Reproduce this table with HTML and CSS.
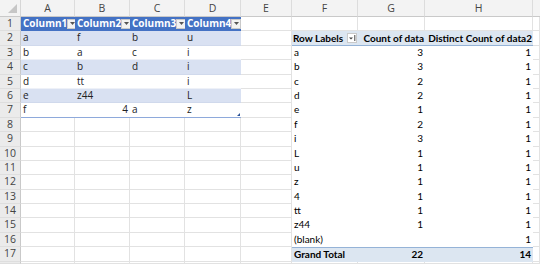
FILE: index.html
```html
<!DOCTYPE html>
<html>
<head>
<meta charset="utf-8">
<link rel="stylesheet" href="styles.css">
</head>
<body>
<div class="sheet">
  <!-- column headers -->
  <div class="corner"><svg width="21" height="17" viewBox="0 0 21 17"><polygon points="17,4 17,13 8,13" fill="#c6c6c6"/></svg></div>
  <div class="ch">A</div><div class="ch">B</div><div class="ch">C</div><div class="ch">D</div><div class="ch">E</div><div class="ch">F</div><div class="ch">G</div><div class="ch">H</div><div class="ch last"></div>

  <!-- row 1 -->
  <div class="rh">1</div>
  <div class="th"><span>Column1</span><span class="dd"><svg width="5" height="3" viewBox="0 0 5 3"><polygon points="0,0 5,0 2.5,3" fill="#555"/></svg></span></div>
  <div class="th"><span>Column2</span><span class="dd"><svg width="5" height="3" viewBox="0 0 5 3"><polygon points="0,0 5,0 2.5,3" fill="#555"/></svg></span></div>
  <div class="th"><span>Column3</span><span class="dd"><svg width="5" height="3" viewBox="0 0 5 3"><polygon points="0,0 5,0 2.5,3" fill="#555"/></svg></span></div>
  <div class="th"><span>Column4</span><span class="dd"><svg width="5" height="3" viewBox="0 0 5 3"><polygon points="0,0 5,0 2.5,3" fill="#555"/></svg></span></div>
  <div class="c"></div><div class="c"></div><div class="c"></div><div class="c"></div><div class="c"></div>

  <!-- row 2 -->
  <div class="rh">2</div>
  <div class="tb">a</div><div class="tb">f</div><div class="tb">b</div><div class="tb">u</div>
  <div class="c"></div>
  <div class="ph"><span>Row Labels</span><span class="fb"><svg width="8" height="8" viewBox="0 0 8 8"><polygon points="1,3.5 5,3.5 3,5.5" fill="#444"/><rect x="6.3" y="1" width="1" height="6" fill="#444"/></svg></span></div>
  <div class="ph num">Count of data</div>
  <div class="ph num">Distinct Count of data2</div>
  <div class="c"></div>

  <!-- row 3 -->
  <div class="rh">3</div>
  <div class="tw">b</div><div class="tw">a</div><div class="tw">c</div><div class="tw">i</div>
  <div class="c"></div>
  <div class="pv">a</div><div class="pv num">3</div><div class="pv num">1</div>
  <div class="c"></div>

  <!-- row 4 -->
  <div class="rh">4</div>
  <div class="tb">c</div><div class="tb">b</div><div class="tb">d</div><div class="tb">i</div>
  <div class="c"></div>
  <div class="pv">b</div><div class="pv num">3</div><div class="pv num">1</div>
  <div class="c"></div>

  <!-- row 5 -->
  <div class="rh">5</div>
  <div class="tw">d</div><div class="tw">tt</div><div class="tw"></div><div class="tw">i</div>
  <div class="c"></div>
  <div class="pv">c</div><div class="pv num">2</div><div class="pv num">1</div>
  <div class="c"></div>

  <!-- row 6 -->
  <div class="rh">6</div>
  <div class="tb">e</div><div class="tb">z44</div><div class="tb"></div><div class="tb">L</div>
  <div class="c"></div>
  <div class="pv">d</div><div class="pv num">2</div><div class="pv num">1</div>
  <div class="c"></div>

  <!-- row 7 -->
  <div class="rh">7</div>
  <div class="tw end">f</div><div class="tw end num">4</div><div class="tw end">a</div><div class="tw end handle">z</div>
  <div class="c"></div>
  <div class="pv">e</div><div class="pv num">1</div><div class="pv num">1</div>
  <div class="c"></div>

  <!-- row 8 -->
  <div class="rh">8</div>
  <div class="c"></div><div class="c"></div><div class="c"></div><div class="c"></div><div class="c"></div>
  <div class="pv">f</div><div class="pv num">2</div><div class="pv num">1</div>
  <div class="c"></div>

  <!-- row 9 -->
  <div class="rh">9</div>
  <div class="c"></div><div class="c"></div><div class="c"></div><div class="c"></div><div class="c"></div>
  <div class="pv">i</div><div class="pv num">3</div><div class="pv num">1</div>
  <div class="c"></div>

  <!-- row 10 -->
  <div class="rh">10</div>
  <div class="c"></div><div class="c"></div><div class="c"></div><div class="c"></div><div class="c"></div>
  <div class="pv">L</div><div class="pv num">1</div><div class="pv num">1</div>
  <div class="c"></div>

  <!-- row 11 -->
  <div class="rh">11</div>
  <div class="c"></div><div class="c"></div><div class="c"></div><div class="c"></div><div class="c"></div>
  <div class="pv">u</div><div class="pv num">1</div><div class="pv num">1</div>
  <div class="c"></div>

  <!-- row 12 -->
  <div class="rh">12</div>
  <div class="c"></div><div class="c"></div><div class="c"></div><div class="c"></div><div class="c"></div>
  <div class="pv">z</div><div class="pv num">1</div><div class="pv num">1</div>
  <div class="c"></div>

  <!-- row 13 -->
  <div class="rh">13</div>
  <div class="c"></div><div class="c"></div><div class="c"></div><div class="c"></div><div class="c"></div>
  <div class="pv">4</div><div class="pv num">1</div><div class="pv num">1</div>
  <div class="c"></div>

  <!-- row 14 -->
  <div class="rh">14</div>
  <div class="c"></div><div class="c"></div><div class="c"></div><div class="c"></div><div class="c"></div>
  <div class="pv">tt</div><div class="pv num">1</div><div class="pv num">1</div>
  <div class="c"></div>

  <!-- row 15 -->
  <div class="rh">15</div>
  <div class="c"></div><div class="c"></div><div class="c"></div><div class="c"></div><div class="c"></div>
  <div class="pv">z44</div><div class="pv num">1</div><div class="pv num">1</div>
  <div class="c"></div>

  <!-- row 16 -->
  <div class="rh">16</div>
  <div class="c"></div><div class="c"></div><div class="c"></div><div class="c"></div><div class="c"></div>
  <div class="pv">(blank)</div><div class="pv num"></div><div class="pv num">1</div>
  <div class="c"></div>

  <!-- row 17 -->
  <div class="rh">17</div>
  <div class="c"></div><div class="c"></div><div class="c"></div><div class="c"></div><div class="c"></div>
  <div class="pt">Grand Total</div><div class="pt num">22</div><div class="pt num">14</div>
  <div class="c"></div>

  <!-- row 18 (partial) -->
  <div class="rh"></div>
  <div class="c"></div><div class="c"></div><div class="c"></div><div class="c"></div><div class="c"></div><div class="c"></div><div class="c"></div><div class="c"></div><div class="c"></div>
</div>
</body>
</html>
```

FILE: styles.css
```css
html, body {
  margin: 0;
  padding: 0;
  background: #ffffff;
}

body {
  width: 540px;
  height: 264px;
  overflow: hidden;
}

.sheet {
  display: grid;
  grid-template-columns: 21px 54px 55px 55px 56px 51px 66px 67px 108px 7px;
  grid-template-rows: 17px repeat(17, 14.4px) 2px;
  font-family: "Open Sans", "Noto Sans", sans-serif;
  font-size: 10px;
  color: #222;
}

.sheet > div {
  box-sizing: border-box;
  white-space: nowrap;
  overflow: hidden;
  line-height: 13px;
  padding: 0 2px;
}

.corner {
  background: #f3f3f3;
  border-right: 1px solid #d6d6d6;
  border-bottom: 1px solid #c9c9c9;
  padding: 0 !important;
}

.corner svg {
  display: block;
}

.ch {
  background: #f3f3f3;
  border-right: 1px solid #dcdcdc;
  border-bottom: 1px solid #c9c9c9;
  text-align: center;
  color: #444;
  line-height: 17px !important;
  font-size: 10.5px;
}

.ch.last {
  border-right: none;
}

.rh {
  background: #ebebeb;
  border-right: 1px solid #c9c9c9;
  border-bottom: 1px solid #dedede;
  text-align: center;
  color: #444;
  font-size: 10.5px;
  padding: 0 !important;
}

.c {
  border-right: 1px solid #e2e2e2;
  border-bottom: 1px solid #e2e2e2;
}

.th {
  background: #4472c4;
  color: #ffffff;
  font-weight: 700;
  display: flex;
  align-items: center;
  justify-content: space-between;
  padding: 0 1px 0 2px !important;
  border-bottom: 1px solid #4472c4;
}

.dd {
  width: 10px;
  height: 10px;
  background: #f2f2f2;
  border: 1px solid #c9c9c9;
  box-sizing: border-box;
  display: flex;
  align-items: center;
  justify-content: center;
  flex: none;
}

.dd svg {
  display: block;
}

.tb {
  background: #d9e1f2;
  border-bottom: 1px solid #d0d9ec;
}

.tw {
  background: #ffffff;
  border-bottom: 1px solid #eef1f8;
}

.tw.end {
  border-bottom: 1px solid #8ea9db;
}

.handle {
  position: relative;
}

.handle::after {
  content: "";
  position: absolute;
  right: 1px;
  bottom: 1px;
  width: 0;
  height: 0;
  border-left: 3px solid transparent;
  border-bottom: 3px solid #2f5597;
}

.num {
  text-align: right;
}

.pv,
.ph,
.pt {
  font-family: "Lato", "Liberation Sans", sans-serif;
  font-size: 10px;
  color: #000;
  background: #ffffff;
}

.sheet > .ph {
  background: #dce6f1;
  font-weight: 700;
  border-bottom: 1px solid #95b3d7;
  display: flex;
  align-items: center;
  gap: 2px;
  padding: 0 1px;
}

.ph.num {
  justify-content: flex-end;
}

.fb {
  width: 10px;
  height: 10px;
  background: #ffffff;
  border: 1px solid #c9c9c9;
  box-sizing: border-box;
  margin-left: auto;
  display: flex;
  align-items: center;
  justify-content: center;
  flex: none;
}

.fb svg {
  display: block;
}

.pt {
  background: #dce6f1;
  font-weight: 700;
  border-top: 1px solid #95b3d7;
}
```
